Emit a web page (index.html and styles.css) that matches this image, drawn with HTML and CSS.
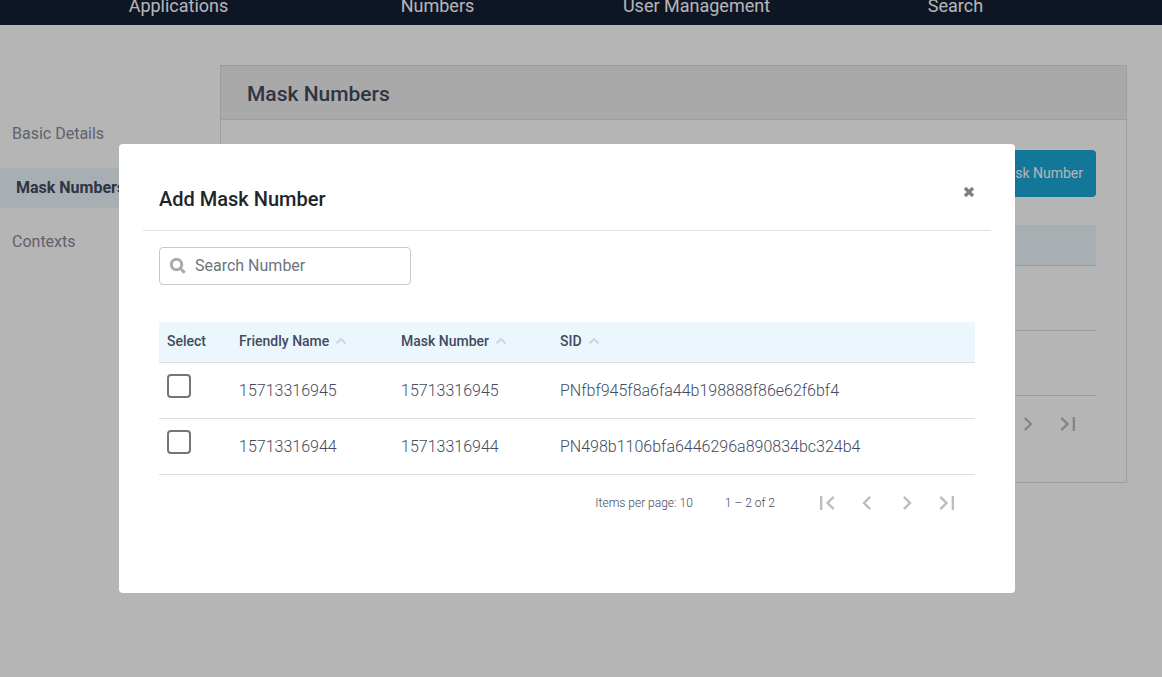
FILE: index.html
```html
<!DOCTYPE html>
<html lang="en">
<head>
<meta charset="utf-8">
<title>Mask Numbers</title>
<link rel="stylesheet" href="styles.css">
</head>
<body>
<svg class="sprite" aria-hidden="true">
  <symbol id="first" viewBox="0 0 24 24"><path d="M18.41 16.59L13.82 12l4.59-4.59L17 6l-6 6 6 6zM6 6h2v12H6z"/></symbol>
  <symbol id="prev" viewBox="0 0 24 24"><path d="M15.41 7.41L14 6l-6 6 6 6 1.41-1.41L10.83 12z"/></symbol>
  <symbol id="next" viewBox="0 0 24 24"><path d="M10 6L8.59 7.41 13.17 12l-4.58 4.59L10 18l6-6z"/></symbol>
  <symbol id="last" viewBox="0 0 24 24"><path d="M5.59 7.41L10.18 12l-4.59 4.59L7 18l6-6-6-6zM16 6h2v12h-2z"/></symbol>
  <symbol id="sort" viewBox="0 0 12 8"><path d="M1.5 5.5L6 1l4.500 4.500" fill="none" stroke="currentColor" stroke-width="2"/></symbol>
</svg>

<nav class="topnav">
  <a href="#">Applications</a>
  <a href="#">Numbers</a>
  <a href="#">User Management</a>
  <a href="#">Search</a>
</nav>

<div class="page">
  <aside class="sidebar">
    <a href="#">Basic Details</a>
    <a href="#" class="active">Mask Numbers</a>
    <a href="#">Contexts</a>
  </aside>
  <main class="panel">
    <h1 class="panel-title">Mask Numbers</h1>
    <div class="panel-body">
      <button class="primary" type="button">Add Mask Number</button>
      <div class="list">
        <div class="list-head"></div>
        <div class="list-row"></div>
        <div class="list-row"></div>
      </div>
      <div class="pager">
        <button type="button" aria-label="Next page"><svg><use href="#next"/></svg></button>
        <button type="button" aria-label="Last page"><svg><use href="#last"/></svg></button>
      </div>
    </div>
  </main>
</div>

<div class="backdrop">
  <section class="modal" role="dialog" aria-labelledby="modal-title">
    <header class="modal-head">
      <h2 id="modal-title">Add Mask Number</h2>
      <button class="close" type="button" aria-label="Close">
        <svg viewBox="0 0 12 12"><path d="M2 2l8 8M10 2l-8 8" stroke="currentColor" stroke-width="3.200"/></svg>
      </button>
    </header>
    <div class="modal-body">
      <label class="search">
        <svg viewBox="0 0 16 16"><circle cx="6.500" cy="6.500" r="5.200"/><path d="M10.500 10.500l4.200 4.200"/></svg>
        <input type="text" placeholder="Search Number" aria-label="Search Number">
      </label>
      <table class="numbers">
        <colgroup><col class="c-select"><col class="c-name"><col class="c-mask"><col></colgroup>
        <thead>
          <tr>
            <th>Select</th>
            <th>Friendly Name<svg><use href="#sort"/></svg></th>
            <th>Mask Number<svg><use href="#sort"/></svg></th>
            <th>SID<svg><use href="#sort"/></svg></th>
          </tr>
        </thead>
        <tbody>
          <tr>
            <td class="pick"><input type="checkbox" aria-label="Select 15713316945"></td>
            <td>15713316945</td><td>15713316945</td><td>PNfbf945f8a6fa44b198888f86e62f6bf4</td>
          </tr>
          <tr>
            <td class="pick"><input type="checkbox" aria-label="Select 15713316944"></td>
            <td>15713316944</td><td>15713316944</td><td>PN498b1106bfa6446296a890834bc324b4</td>
          </tr>
        </tbody>
      </table>
      <div class="pager">
        <span class="per-page">Items per page: 10</span>
        <span class="range">1 – 2 of 2</span>
        <button type="button" aria-label="First page"><svg><use href="#first"/></svg></button>
        <button type="button" aria-label="Previous page"><svg><use href="#prev"/></svg></button>
        <button type="button" aria-label="Next page"><svg><use href="#next"/></svg></button>
        <button type="button" aria-label="Last page"><svg><use href="#last"/></svg></button>
      </div>
    </div>
  </section>
</div>
</body>
</html>
```
FILE: styles.css
```css
* { box-sizing: border-box; }
body {
  margin: 0;
  min-height: 100vh;
  background: #fff;
  color: #434a60;
  font-family: Roboto, "Liberation Sans", sans-serif;
  font-size: 16px;
}
h1, h2 { margin: 0; font-weight: 500; }
a { text-decoration: none; color: inherit; }
button { border: 0; padding: 0; background: none; font: inherit; color: inherit; }
.sprite { display: none; }

.topnav {
  display: grid;
  grid-template-columns: repeat(4, 1fr);
  grid-template-rows: 17px;
  align-items: end;
  height: 25px;
  padding: 0 77px 8px 49px;
  overflow: hidden;
  background: #151f36;
  color: #fff;
  font-size: 18px;
  line-height: 22px;
  text-align: center;
}

.page { display: flex; padding-right: 35px; }
.sidebar {
  flex: 0 0 220px;
  display: flex;
  flex-direction: column;
  gap: 14px;
  padding-top: 89px;
}
.sidebar a { padding-left: 12px; line-height: 40px; color: #868b98; }
.sidebar .active { padding-left: 16px; background: #ebf7fd; color: #434a60; font-weight: 700; }

.panel { flex: 1; margin-top: 40px; border: 1px solid #ddd; }
.panel-title {
  padding: 3px 26px 0;
  border-bottom: 1px solid #ddd;
  background: #efefef;
  font-size: 21px;
  line-height: 50px;
}
.panel-body {
  display: flex;
  flex-direction: column;
  padding: 30px 30px 30px;
}
.primary {
  align-self: flex-end;
  padding: 0 13px;
  border-radius: 4px;
  background: #1ca8da;
  color: #fff;
  font-size: 14px;
  line-height: 47px;
}
.list { margin-top: 28px; }
.list-head { height: 41px; border-bottom: 1px solid #ddd; background: #ebf7fd; }
.list-row { height: 65px; border-bottom: 1px solid #ddd; }

.backdrop {
  position: fixed;
  inset: 0;
  display: flex;
  justify-content: center;
  align-items: flex-start;
  padding: 144px 28px 0 0;
  background: rgba(0, 0, 0, .29);
}
.modal {
  width: 100%;
  max-width: 896px;
  padding: 24px 24px 62px;
  border-radius: 4px;
  background: #fff;
}
.modal-head {
  display: flex;
  justify-content: space-between;
  align-items: flex-start;
  padding: 16px;
  border-bottom: 1px solid #dee2e6;
  color: #212529;
}
.modal-head h2 { font-size: 20px; line-height: 30px; }
.close { display: flex; padding: 2px 0; color: #7f7f7f; }
.close svg { width: 12px; height: 12px; }
.modal-body { padding: 16px 16px 0; }

.search {
  display: flex;
  align-items: center;
  gap: 9px;
  width: 252px;
  height: 38px;
  padding: 0 10px;
  border: 1px solid #c8c8c8;
  border-radius: 4px;
}
.search svg { width: 16px; height: 16px; flex: none; fill: none; stroke: #aaa; stroke-width: 3; }
.search input { width: 100%; padding: 0 0 2px; border: 0; outline: 0; font: inherit; }
.search input::placeholder { color: #6c757d; }

.numbers { width: 100%; margin-top: 37px; border-collapse: separate; border-spacing: 0; table-layout: fixed; }
.c-select { width: 72px; }
.c-name { width: 162px; }
.c-mask { width: 159px; }
.numbers th {
  height: 41px;
  padding: 0 8px 2px;
  border-bottom: 1px solid #ddd;
  background: #ebf7fd;
  font-size: 14px;
  font-weight: 500;
  text-align: left;
}
.numbers th svg { width: 12px; height: 8px; margin-left: 6px; color: #cfd6da; }
.numbers td { height: 56px; padding: 0 8px; border-bottom: 1px solid #ddd; font-weight: 300; }
.numbers .pick { padding-bottom: 10px; }
.pick input {
  appearance: none;
  display: block;
  width: 24px;
  height: 24px;
  margin: 0;
  border: 2px solid #757575;
  border-radius: 4px;
}

.pager {
  display: flex;
  justify-content: flex-end;
  align-items: center;
  height: 56px;
  padding-right: 8px;
  font-size: 12px;
  font-weight: 300;
}
.range { margin: 0 32px; }
.pager button { display: grid; place-items: center; width: 40px; height: 40px; color: #bdbdbd; }
.pager svg { width: 28px; height: 28px; fill: currentColor; }
```
